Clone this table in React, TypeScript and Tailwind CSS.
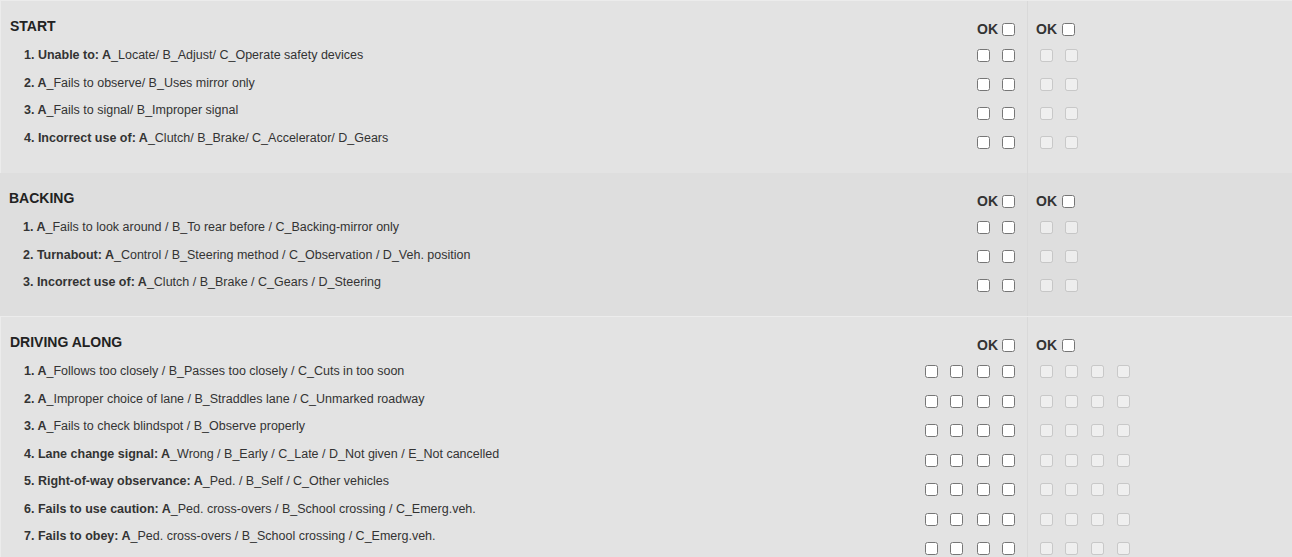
import React from "react";

type Item = { bold: string; rest: string };

type Section = {
  title: string;
  cols: number;
  items: Item[];
  shade: string;
  rowH: string;
};

const sections: Section[] = [
  {
    title: "START",
    cols: 2,
    shade: "bg-[#e3e3e3] border-t border-l border-[#ececec]",
    rowH: "h-[29px]",
    items: [
      { bold: "1. Unable to: A", rest: "_Locate/ B_Adjust/ C_Operate safety devices" },
      { bold: "2. A", rest: "_Fails to observe/ B_Uses mirror only" },
      { bold: "3. A", rest: "_Fails to signal/ B_Improper signal" },
      { bold: "4. Incorrect use of: A", rest: "_Clutch/ B_Brake/ C_Accelerator/ D_Gears" },
    ],
  },
  {
    title: "BACKING",
    cols: 2,
    shade: "bg-[#dedede]",
    rowH: "h-[29px]",
    items: [
      { bold: "1. A", rest: "_Fails to look around / B_To rear before / C_Backing-mirror only" },
      { bold: "2. Turnabout: A", rest: "_Control / B_Steering method / C_Observation / D_Veh. position" },
      { bold: "3. Incorrect use of: A", rest: "_Clutch / B_Brake / C_Gears / D_Steering" },
    ],
  },
  {
    title: "DRIVING ALONG",
    cols: 4,
    shade: "bg-[#e3e3e3] border-t border-l border-[#ececec]",
    rowH: "h-[29.5px]",
    items: [
      { bold: "1. A", rest: "_Follows too closely / B_Passes too closely / C_Cuts in too soon" },
      { bold: "2. A", rest: "_Improper choice of lane / B_Straddles lane / C_Unmarked roadway" },
      { bold: "3. A", rest: "_Fails to check blindspot / B_Observe properly" },
      { bold: "4. Lane change signal: A", rest: "_Wrong / B_Early / C_Late / D_Not given / E_Not cancelled" },
      { bold: "5. Right-of-way observance: A", rest: "_Ped. / B_Self / C_Other vehicles" },
      { bold: "6. Fails to use caution: A", rest: "_Ped. cross-overs / B_School crossing / C_Emerg.veh." },
      { bold: "7. Fails to obey: A", rest: "_Ped. cross-overs / B_School crossing / C_Emerg.veh." },
    ],
  },
];

// checkbox spacing, left margins per column
const onGaps = ["ml-0", "ml-[12px]", "ml-[14px]", "ml-[12px]"];
const offGaps = ["ml-0", "ml-[12px]", "ml-[13px]", "ml-[13px]"];

const Box = ({ disabled, className }: { disabled?: boolean; className?: string }) => (
  <input type="checkbox" disabled={disabled} className={`m-0 w-[13px] h-[13px] ${className ?? ""}`} />
);

const Block = ({ s }: { s: Section }) => {
  const rows = s.items.length;
  return (
    <div className={`flex ${s.shade}`}>
      {/* texte des fautes */}
      <div className="flex-1 pl-[9px] pt-[17px]">
        <div className="text-[14px] leading-[16px] font-bold text-[#222]">{s.title}</div>
        <div className="mt-[8px] pl-[14px]">
          {s.items.map((it, i) => (
            <div key={i} className="h-[27.5px] flex items-center text-[12.5px] text-[#333]">
              <span className="font-bold">{it.bold}</span>
              <span>{it.rest}</span>
            </div>
          ))}
        </div>
      </div>

      {/* colonne cochable */}
      <div className="pt-[18px] pb-4 pr-[12px]">
        <div className="h-[20px] flex items-center justify-end">
          <span className="text-[14px] font-bold text-[#333] mr-[4px]">OK</span>
          <Box />
        </div>
        <div className="mt-[2px]">
          {Array.from({ length: rows }).map((_, r) => (
            <div key={r} className={`${s.rowH} flex items-center justify-end`}>
              {Array.from({ length: s.cols }).map((_, c) => (
                <Box key={c} className={onGaps[c]} />
              ))}
            </div>
          ))}
        </div>
      </div>

      {/* colonne examinateur (désactivée) */}
      <div className="w-[265px] border-l border-[#d9d9d9] pt-[18px] pb-4">
        <div className="h-[20px] flex items-center pl-[8px]">
          <span className="text-[14px] font-bold text-[#333] mr-[5px]">OK</span>
          <Box />
        </div>
        <div className="mt-[2px] pl-[12px]">
          {Array.from({ length: rows }).map((_, r) => (
            <div key={r} className={`${s.rowH} flex items-center`}>
              {Array.from({ length: s.cols }).map((_, c) => (
                <Box key={c} disabled className={offGaps[c]} />
              ))}
            </div>
          ))}
        </div>
      </div>
    </div>
  );
};

export default function App() {
  return (
    <div className="w-[1292px] h-[557px] overflow-hidden bg-[#ececec] font-['Liberation_Sans',Arial,sans-serif]">
      {sections.map((s) => (
        <Block key={s.title} s={s} />
      ))}
    </div>
  );
}
